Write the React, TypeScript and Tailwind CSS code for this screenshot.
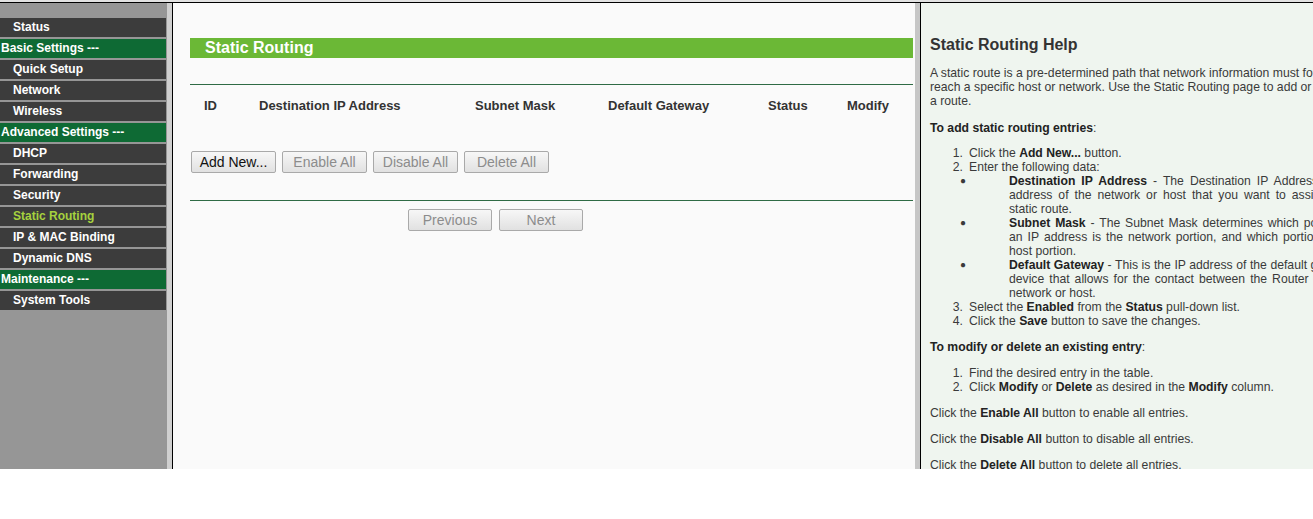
const menu = [
  { label: "Status", kind: "item" },
  { label: "Basic Settings ---", kind: "group" },
  { label: "Quick Setup", kind: "item" },
  { label: "Network", kind: "item" },
  { label: "Wireless", kind: "item" },
  { label: "Advanced Settings ---", kind: "group" },
  { label: "DHCP", kind: "item" },
  { label: "Forwarding", kind: "item" },
  { label: "Security", kind: "item" },
  { label: "Static Routing", kind: "active" },
  { label: "IP & MAC Binding", kind: "item" },
  { label: "Dynamic DNS", kind: "item" },
  { label: "Maintenance ---", kind: "group" },
  { label: "System Tools", kind: "item" },
]

const font = { fontFamily: '"Liberation Sans", Arial, sans-serif' }

function Sidebar() {
  return (
    <div className="w-[167px] shrink-0 bg-[#969696] pt-[15px]">
      {menu.map((m) => (
        <div
          key={m.label}
          className={
            m.kind === "group"
              ? "mb-[2px] h-[19px] w-[166px] bg-[#0e6a34] pl-[1px] text-[12px] font-bold leading-[19px] text-white"
              : m.kind === "active"
                ? "mb-[2px] h-[19px] w-[166px] bg-[#3c3c3c] pl-[13px] text-[12px] font-bold leading-[19px] text-[#a6d23e]"
                : "mb-[2px] h-[19px] w-[166px] bg-[#3c3c3c] pl-[13px] text-[12px] font-bold leading-[19px] text-white"
          }
        >
          {m.label}
        </div>
      ))}
    </div>
  )
}

function Btn({ label, enabled, w }: { label: string; enabled?: boolean; w: string }) {
  return (
    <button
      className={`${w} h-[22px] rounded-[2px] border border-[#a9a9a9] bg-gradient-to-b from-[#f7f7f7] to-[#e1e1e1] text-[14px] leading-[20px] ${
        enabled ? "text-[#111]" : "text-[#8c8c8c]"
      }`}
    >
      {label}
    </button>
  )
}

function MainPanel() {
  return (
    <div className="w-[742px] shrink-0 bg-[#fafafa] pl-[17px] pr-[2px] pt-[35px]">
      <div className="h-[20px] bg-[#6bb836] pl-[15px] text-[16px] font-bold leading-[20px] text-white">
        Static Routing
      </div>
      <div className="mt-[26px] h-px bg-[#2f6b45]" />
      <div className="mt-[10px] grid h-[22px] grid-cols-[55px_216px_133px_160px_79px_1fr] pl-[14px] text-[13px] font-bold leading-[22px] text-[#333]">
        <div>ID</div>
        <div>Destination IP Address</div>
        <div>Subnet Mask</div>
        <div>Default Gateway</div>
        <div>Status</div>
        <div>Modify</div>
      </div>
      <div className="mt-[34px] flex gap-[6px] pl-px">
        <Btn label="Add New..." enabled w="w-[85px]" />
        <Btn label="Enable All" w="w-[85px]" />
        <Btn label="Disable All" w="w-[85px]" />
        <Btn label="Delete All" w="w-[85px]" />
      </div>
      <div className="mt-[27px] h-px bg-[#2f6b45]" />
      <div className="mt-[8px] flex gap-[7px] pl-[218px]">
        <Btn label="Previous" w="w-[84px]" />
        <Btn label="Next" w="w-[84px]" />
      </div>
    </div>
  )
}

function Num({ n, children }: { n: number; children: React.ReactNode }) {
  return (
    <div className="flex">
      <span className="w-[39px] shrink-0 pr-[6px] text-right">{n}.</span>
      <div className="flex-1">{children}</div>
    </div>
  )
}

function Bullet({ title, children }: { title: string; children: React.ReactNode }) {
  return (
    <div className="flex">
      <span className="w-[79px] shrink-0 pl-[30px] text-[10px]">●</span>
      <div className="w-[347px] shrink-0 text-justify">
        <b className="text-[#222]">{title}</b> - {children}
      </div>
    </div>
  )
}

function HelpPanel() {
  return (
    <div className="min-w-0 flex-1 overflow-hidden bg-[#eff5ef] pl-[9px] pt-[32px]">
      <div className="w-[440px] text-[12.2px] leading-[14px] text-[#3a3a3a]">
        <h2 className="text-[16px] font-bold leading-[20px] text-[#333]">Static Routing Help</h2>
        <p className="mt-[11px]">
          A static route is a pre-determined path that network information must follow to
          <br />
          reach a specific host or network. Use the Static Routing page to add or delete
          <br />a route.
        </p>
        <p className="mt-[13px]">
          <b className="text-[#222]">To add static routing entries</b>:
        </p>
        <div className="mt-[11px]">
          <Num n={1}>
            Click the <b className="text-[#222]">Add New...</b> button.
          </Num>
          <Num n={2}>Enter the following data:</Num>
          <Bullet title="Destination IP Address">
            The Destination IP Address is the address of the network or host that you want to assign to a static route.
          </Bullet>
          <Bullet title="Subnet Mask">
            The Subnet Mask determines which portion of an IP address is the network portion, and which portion is the
            host portion.
          </Bullet>
          <Bullet title="Default Gateway">
            This is the IP address of the default gateway device that allows for the contact between the Router and the
            network or host.
          </Bullet>
          <Num n={3}>
            Select the <b className="text-[#222]">Enabled</b> from the <b className="text-[#222]">Status</b> pull-down
            list.
          </Num>
          <Num n={4}>
            Click the <b className="text-[#222]">Save</b> button to save the changes.
          </Num>
        </div>
        <p className="mt-[12px]">
          <b className="text-[#222]">To modify or delete an existing entry</b>:
        </p>
        <div className="mt-[12px]">
          <Num n={1}>Find the desired entry in the table.</Num>
          <Num n={2}>
            Click <b className="text-[#222]">Modify</b> or <b className="text-[#222]">Delete</b> as desired in the{" "}
            <b className="text-[#222]">Modify</b> column.
          </Num>
        </div>
        <p className="mt-[12px]">
          Click the <b className="text-[#222]">Enable All</b> button to enable all entries.
        </p>
        <p className="mt-[12px]">
          Click the <b className="text-[#222]">Disable All</b> button to disable all entries.
        </p>
        <p className="mt-[12px]">
          Click the <b className="text-[#222]">Delete All</b> button to delete all entries.
        </p>
      </div>
    </div>
  )
}

export default function App() {
  return (
    <div className="h-[519px] w-[1313px] bg-white" style={font}>
      <div className="flex h-[469px] flex-col overflow-hidden">
        <div className="h-[2px] shrink-0 bg-[#e2e2e2]" />
        <div className="h-px shrink-0 bg-black" />
        <div className="flex min-h-0 flex-1">
          <Sidebar />
          <div className="w-[5px] shrink-0 bg-[#cfcfcf]" />
          <div className="w-px shrink-0 bg-black" />
          <MainPanel />
          <div className="w-[5px] shrink-0 bg-[#c6c6c6]" />
          <div className="w-px shrink-0 bg-black" />
          <HelpPanel />
        </div>
      </div>
    </div>
  )
}
